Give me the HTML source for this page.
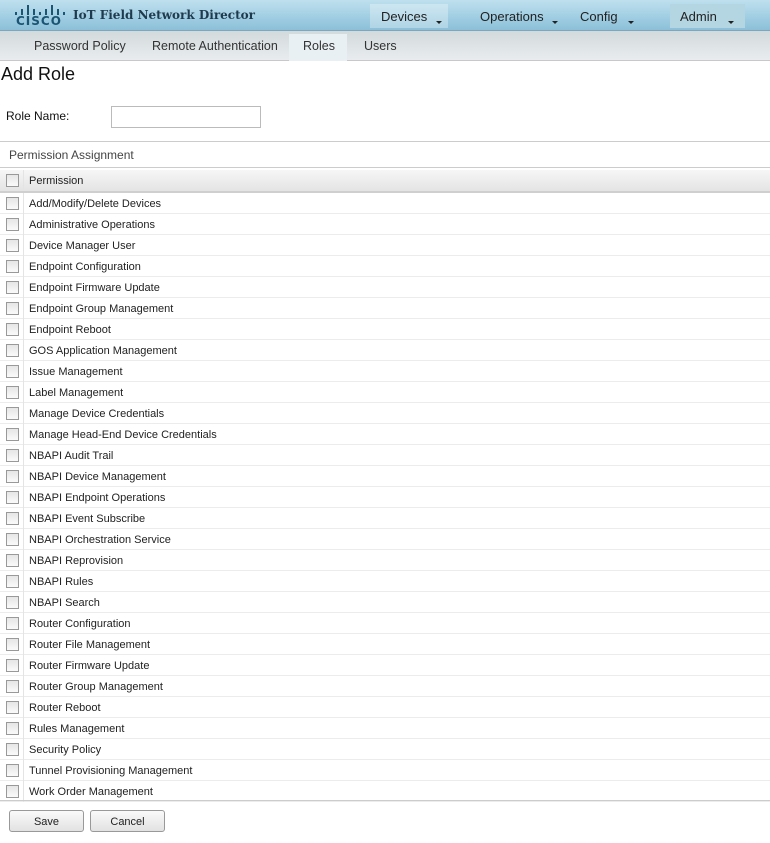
<!DOCTYPE html>
<html><head><meta charset="utf-8"><style>
*{margin:0;padding:0;box-sizing:border-box}
body{width:770px;height:843px;background:#fff;font-family:"Liberation Sans",Arial,sans-serif;position:relative;overflow:hidden}
.top{position:absolute;left:0;top:0;width:770px;height:31px;background:linear-gradient(#bfe0ee,#9fcde2 60%,#8cc0d8);border-bottom:1px solid #7aa9bf}
.logo{position:absolute;left:14px;top:3px;width:50px;height:26px}
.bar{position:absolute;bottom:14px;width:2px;background:#1b5573}
.cisco{position:absolute;left:2px;top:11px;font:bold 12px "DejaVu Sans",sans-serif;color:#1b5573;letter-spacing:1px}
.title{position:absolute;left:73px;top:8px;font:bold 12px "DejaVu Serif",serif;color:#1f3a4d}
.menu{position:absolute;top:4px;height:24px;font-size:13px;color:#222;padding-top:5px}
.menu i{position:absolute;top:17px;width:0;height:0;border-left:3px solid transparent;border-right:3px solid transparent;border-top:3px solid #222}
.sub{position:absolute;left:0;top:31px;width:770px;height:30px;background:linear-gradient(#d3dadc,#e8ecee);border-bottom:1px solid #c8c8c8}
.sub span{position:absolute;top:8px;font-size:12.5px;color:#333}
.roles{position:absolute;left:289px;width:58px;height:27px;background:#e9f0f3}
h1{position:absolute;left:1px;top:64px;font-weight:normal;font-size:18px;color:#111}
.lbl{position:absolute;left:6px;top:109px;font-size:12px;color:#111}
.inp{position:absolute;left:111px;top:106px;width:150px;height:22px;border:1px solid #bbb;background:#fff}
.pa{position:absolute;left:0;top:141px;width:770px;height:27px;border-top:1px solid #ccc;border-bottom:1px solid #ccc;font:12px "Liberation Sans",sans-serif;color:#444;padding:6px 0 0 9px}
.tbl{position:absolute;left:0;top:170px;width:770px}
.row{height:21px;border-bottom:1px solid #ececec;position:relative;font:11px "Liberation Sans",sans-serif;color:#222}
.row .c{position:absolute;left:0;top:0;width:24px;height:21px;border-right:1px solid #e4e4e4}
.row .c b{position:absolute;left:6px;top:4px;width:13px;height:13px;border:1px solid #999;background:linear-gradient(#e6e6e6,#fafafa)}
.row span{position:absolute;left:29px;top:5px}
.hd{background:linear-gradient(#f6f6f6,#e4e4e4);border-bottom:2px solid #cfcfcf;height:23px}
.foot{position:absolute;left:0;top:800px;width:770px;border-top:1px solid #ccc}
.btn{position:absolute;top:810px;width:75px;height:22px;border:1px solid #999;border-radius:3px;background:linear-gradient(#fafafa,#e2e2e2);font:11px "Liberation Sans",sans-serif;text-align:center;padding-top:5px;color:#222}
</style></head><body>
<div class="top">
 <div class="logo">
  <div class="bar" style="left:1px;height:3px"></div><div class="bar" style="left:7px;height:6px"></div><div class="bar" style="left:13px;height:10px"></div><div class="bar" style="left:19px;height:6px"></div><div class="bar" style="left:25px;height:3px"></div><div class="bar" style="left:31px;height:6px"></div><div class="bar" style="left:37px;height:10px"></div><div class="bar" style="left:43px;height:6px"></div><div class="bar" style="left:49px;height:3px"></div>
  <div class="cisco">CISCO</div>
 </div>
 <div class="title">IoT Field Network Director</div>
 <div class="menu" style="left:370px;width:78px;background:rgba(255,255,255,.3);padding-left:11px">Devices<i style="left:66px"></i></div>
 <div class="menu" style="left:480px">Operations<i style="left:72px"></i></div>
 <div class="menu" style="left:580px">Config<i style="left:48px"></i></div>
 <div class="menu" style="left:670px;width:75px;background:#b3d6e2;padding-left:10px">Admin<i style="left:58px"></i></div>
</div>
<div class="sub">
 <div class="roles" style="top:3px"></div>
 <span style="left:34px">Password Policy</span>
 <span style="left:152px">Remote Authentication</span>
 <span style="left:303px">Roles</span>
 <span style="left:364px">Users</span>
</div>
<h1>Add Role</h1>
<div class="lbl">Role Name:</div>
<div class="inp"></div>
<div class="pa">Permission Assignment</div>
<div class="tbl">
<div class="row hd"><div class="c"><b></b></div><span>Permission</span></div>
<div class="row"><div class="c"><b></b></div><span>Add/Modify/Delete Devices</span></div>
<div class="row"><div class="c"><b></b></div><span>Administrative Operations</span></div>
<div class="row"><div class="c"><b></b></div><span>Device Manager User</span></div>
<div class="row"><div class="c"><b></b></div><span>Endpoint Configuration</span></div>
<div class="row"><div class="c"><b></b></div><span>Endpoint Firmware Update</span></div>
<div class="row"><div class="c"><b></b></div><span>Endpoint Group Management</span></div>
<div class="row"><div class="c"><b></b></div><span>Endpoint Reboot</span></div>
<div class="row"><div class="c"><b></b></div><span>GOS Application Management</span></div>
<div class="row"><div class="c"><b></b></div><span>Issue Management</span></div>
<div class="row"><div class="c"><b></b></div><span>Label Management</span></div>
<div class="row"><div class="c"><b></b></div><span>Manage Device Credentials</span></div>
<div class="row"><div class="c"><b></b></div><span>Manage Head-End Device Credentials</span></div>
<div class="row"><div class="c"><b></b></div><span>NBAPI Audit Trail</span></div>
<div class="row"><div class="c"><b></b></div><span>NBAPI Device Management</span></div>
<div class="row"><div class="c"><b></b></div><span>NBAPI Endpoint Operations</span></div>
<div class="row"><div class="c"><b></b></div><span>NBAPI Event Subscribe</span></div>
<div class="row"><div class="c"><b></b></div><span>NBAPI Orchestration Service</span></div>
<div class="row"><div class="c"><b></b></div><span>NBAPI Reprovision</span></div>
<div class="row"><div class="c"><b></b></div><span>NBAPI Rules</span></div>
<div class="row"><div class="c"><b></b></div><span>NBAPI Search</span></div>
<div class="row"><div class="c"><b></b></div><span>Router Configuration</span></div>
<div class="row"><div class="c"><b></b></div><span>Router File Management</span></div>
<div class="row"><div class="c"><b></b></div><span>Router Firmware Update</span></div>
<div class="row"><div class="c"><b></b></div><span>Router Group Management</span></div>
<div class="row"><div class="c"><b></b></div><span>Router Reboot</span></div>
<div class="row"><div class="c"><b></b></div><span>Rules Management</span></div>
<div class="row"><div class="c"><b></b></div><span>Security Policy</span></div>
<div class="row"><div class="c"><b></b></div><span>Tunnel Provisioning Management</span></div>
<div class="row"><div class="c"><b></b></div><span>Work Order Management</span></div>
</div>
<div class="foot"></div>
<div class="btn" style="left:9px">Save</div>
<div class="btn" style="left:90px">Cancel</div>
</body></html>
